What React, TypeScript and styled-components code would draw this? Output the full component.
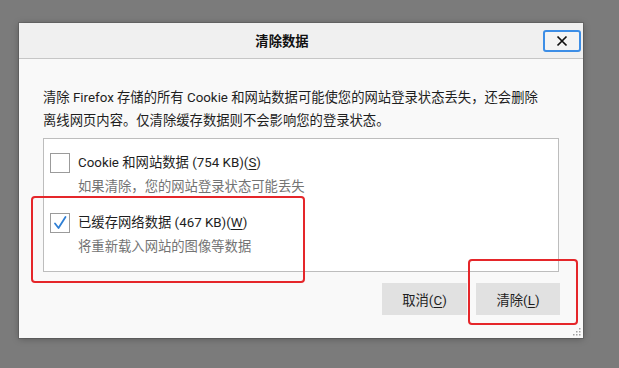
import React from 'react';
import styled, { createGlobalStyle } from 'styled-components';

const GlobalStyle = createGlobalStyle`
  html, body {
    margin: 0;
    padding: 0;
    background: #7b7b7b;
    font-family: Roboto, "Noto Sans CJK SC", sans-serif;
  }
`;

const Page = styled.div`
  width: 619px;
  height: 368px;
  padding: 23px 0 0 19px;
  box-sizing: border-box;
`;

const Dialog = styled.div`
  position: relative;
  width: 564px;
  height: 315px;
  background: #f9f9f9;
  box-shadow: 0 0 0 1px rgba(0, 0, 0, 0.12), 0 1px 7px rgba(0, 0, 0, 0.28);
  display: flex;
  flex-direction: column;
`;

const TitleBar = styled.div`
  height: 35px;
  background: #f0f0f0;
  border-bottom: 1px solid #c6c6c6;
  display: grid;
  grid-template-columns: 1fr auto;
  align-items: center;
  padding-right: 2px;
`;

const Title = styled.div`
  text-align: center;
  font-size: 13.33px;
  font-weight: bold;
  color: #111;
  padding-left: 2px;
`;

const CloseButton = styled.button`
  width: 38px;
  height: 22px;
  padding: 0;
  box-sizing: border-box;
  border: 2px solid #3d8ee6;
  border-radius: 3px;
  background: #f4f4f4;
  display: flex;
  align-items: center;
  justify-content: center;
  margin-top: 1px;
`;

const Body = styled.div`
  flex: 1;
  padding: 27px 24px 0 24px;
  display: flex;
  flex-direction: column;
`;

const Intro = styled.p`
  margin: 0;
  font-size: 13.33px;
  line-height: 23px;
  color: #1e1e1e;
  white-space: nowrap;
`;

const ListBox = styled.div`
  margin-top: 6px;
  height: 134px;
  box-sizing: border-box;
  border: 1px solid #bdbdbd;
  background: #ffffff;
  padding: 12px 6px 0 6px;
  display: flex;
  flex-direction: column;
  gap: 12px;
`;

const Item = styled.div`
  display: grid;
  grid-template-columns: 20px auto;
  column-gap: 8px;
`;

const Box = styled.div`
  width: 20px;
  height: 20px;
  box-sizing: border-box;
  border: 1px solid #9b9b9b;
  background: #fff;
  margin-top: 2px;
  display: flex;
  align-items: center;
  justify-content: center;
`;

const Label = styled.div`
  font-size: 13.33px;
  line-height: 24px;
  color: #1e1e1e;
`;

const Hint = styled.div`
  grid-column: 2;
  font-size: 13.33px;
  line-height: 24px;
  color: #737373;
`;

const Key = styled.span`
  text-decoration: underline;
  text-underline-offset: 2px;
`;

const Buttons = styled.div`
  margin-top: 11px;
  margin-right: -1px;
  display: flex;
  justify-content: flex-end;
  gap: 9px;
`;

const Button = styled.button<{ $w: number }>`
  width: ${p => p.$w}px;
  height: 32px;
  border: none;
  border-radius: 0;
  background: #e1e1e1;
  font-family: inherit;
  font-size: 13.33px;
  color: #1e1e1e;
  padding: 0;
`;

const Marker = styled.div<{ $l: number; $t: number; $w: number; $h: number }>`
  position: absolute;
  left: ${p => p.$l}px;
  top: ${p => p.$t}px;
  width: ${p => p.$w}px;
  height: ${p => p.$h}px;
  box-sizing: border-box;
  border: 2.5px solid #e5262a;
  border-radius: 4px;
  pointer-events: none;
`;

const Grip = styled.svg`
  position: absolute;
  right: 2px;
  bottom: 2px;
`;

function Check() {
  return (
    <svg width="18" height="18" viewBox="0 0 18 18">
      <path d="M4 9.5 L7.5 14 L14.5 3" fill="none" stroke="#2f7fd4" strokeWidth="1.8" strokeLinecap="round" strokeLinejoin="round" />
    </svg>
  );
}

export default function App() {
  return (
    <Page>
      <GlobalStyle />
      <Dialog>
        <TitleBar>
          <Title>清除数据</Title>
          <CloseButton aria-label="关闭">
            <svg width="12" height="12" viewBox="0 0 12 12">
              <path d="M1.5 1.5 L10.5 10.5 M10.5 1.5 L1.5 10.5" stroke="#111" strokeWidth="1.7" />
            </svg>
          </CloseButton>
        </TitleBar>
        <Body>
          <Intro>
            清除 Firefox 存储的所有 Cookie 和网站数据可能使您的网站登录状态丢失，还会删除
            <br />
            离线网页内容。仅清除缓存数据则不会影响您的登录状态。
          </Intro>
          <ListBox>
            <Item>
              <Box />
              <Label>Cookie 和网站数据 (754 KB)(<Key>S</Key>)</Label>
              <Hint>如果清除，您的网站登录状态可能丢失</Hint>
            </Item>
            <Item>
              <Box><Check /></Box>
              <Label>已缓存网络数据 (467 KB)(<Key>W</Key>)</Label>
              <Hint>将重新载入网站的图像等数据</Hint>
            </Item>
          </ListBox>
          <Buttons>
            <Button $w={85}>取消(<Key>C</Key>)</Button>
            <Button $w={84}>清除(<Key>L</Key>)</Button>
          </Buttons>
        </Body>
        <Marker $l={12} $t={173} $w={274} $h={87} />
        <Marker $l={449} $t={236} $w={110} $h={66} />
        <Grip width="8" height="8" viewBox="0 0 8 8">
          <g fill="#a0a0a0">
            <rect x="6" y="0" width="1.5" height="1.5" />
            <rect x="3" y="3" width="1.5" height="1.5" />
            <rect x="6" y="3" width="1.5" height="1.5" />
            <rect x="0" y="6" width="1.5" height="1.5" />
            <rect x="3" y="6" width="1.5" height="1.5" />
            <rect x="6" y="6" width="1.5" height="1.5" />
          </g>
        </Grip>
      </Dialog>
    </Page>
  );
}
